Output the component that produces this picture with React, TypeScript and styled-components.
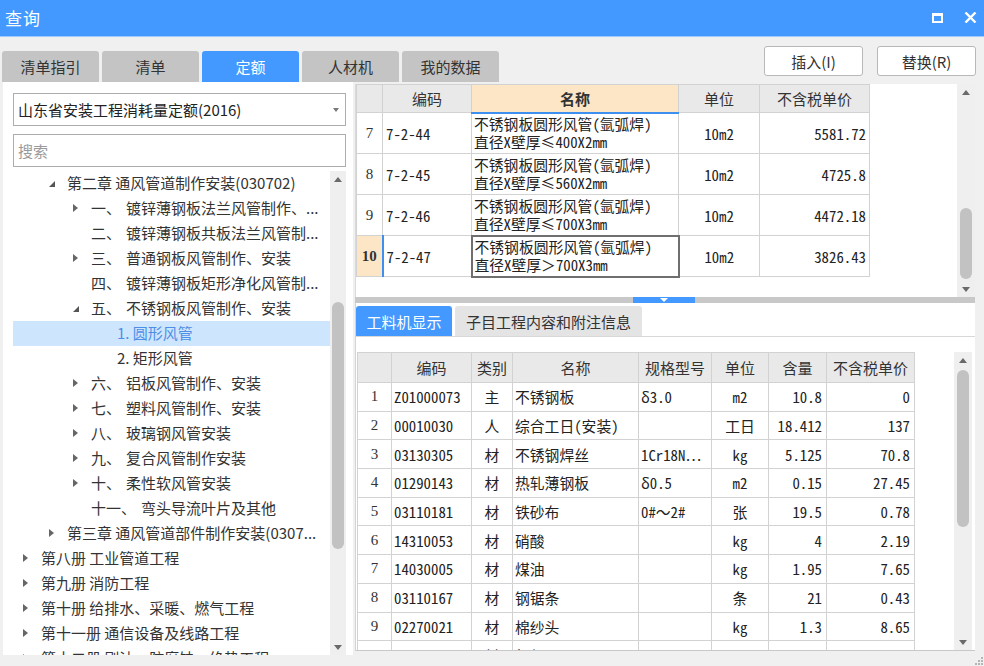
import styled, { createGlobalStyle } from 'styled-components';

const BLUE = '#4399ff';
const GRID = '#d2d2d2';
const PEACH = '#fde6c6';

const GlobalStyle = createGlobalStyle`
  html, body {
    margin: 0;
    padding: 0;
    background: #f0f0f0;
  }
  body {
    font-family: "Noto Sans CJK SC", "Noto Sans", sans-serif;
    color: #333;
    overflow: hidden;
  }
  * {
    box-sizing: border-box;
  }
`;

type TreeItem = {
  level: number;
  caret?: 'open' | 'closed';
  num?: string;
  text: string;
  selected?: boolean;
};

const INDENT = [10, 36, 60, 86];

const treeItems: TreeItem[] = [
  { level: 1, caret: 'open', text: '第二章 通风管道制作安装(030702)' },
  { level: 2, caret: 'closed', num: '一、', text: '镀锌薄钢板法兰风管制作、...' },
  { level: 2, num: '二、', text: '镀锌薄钢板共板法兰风管制...' },
  { level: 2, caret: 'closed', num: '三、', text: '普通钢板风管制作、安装' },
  { level: 2, num: '四、', text: '镀锌薄钢板矩形净化风管制...' },
  { level: 2, caret: 'open', num: '五、', text: '不锈钢板风管制作、安装' },
  { level: 3, text: '1. 圆形风管', selected: true },
  { level: 3, text: '2. 矩形风管' },
  { level: 2, caret: 'closed', num: '六、', text: '铝板风管制作、安装' },
  { level: 2, caret: 'closed', num: '七、', text: '塑料风管制作、安装' },
  { level: 2, caret: 'closed', num: '八、', text: '玻璃钢风管安装' },
  { level: 2, caret: 'closed', num: '九、', text: '复合风管制作安装' },
  { level: 2, caret: 'closed', num: '十、', text: '柔性软风管安装' },
  { level: 2, num: '十一、', text: '弯头导流叶片及其他' },
  { level: 1, caret: 'closed', text: '第三章 通风管道部件制作安装(0307...' },
  { level: 0, caret: 'closed', text: '第八册 工业管道工程' },
  { level: 0, caret: 'closed', text: '第九册 消防工程' },
  { level: 0, caret: 'closed', text: '第十册 给排水、采暖、燃气工程' },
  { level: 0, caret: 'closed', text: '第十一册 通信设备及线路工程' },
  { level: 0, caret: 'closed', text: '第十二册 刷油、防腐蚀、绝热工程' },
];

const quotaRows = [
  { no: '7', code: '7-2-44', name: ['不锈钢板圆形风管(氩弧焊)', '直径X壁厚≤400X2mm'], unit: '10m2', price: '5581.72' },
  { no: '8', code: '7-2-45', name: ['不锈钢板圆形风管(氩弧焊)', '直径X壁厚≤560X2mm'], unit: '10m2', price: '4725.8' },
  { no: '9', code: '7-2-46', name: ['不锈钢板圆形风管(氩弧焊)', '直径X壁厚≤700X3mm'], unit: '10m2', price: '4472.18' },
  { no: '10', code: '7-2-47', name: ['不锈钢板圆形风管(氩弧焊)', '直径X壁厚＞700X3mm'], unit: '10m2', price: '3826.43', active: true },
];

const materialRows = [
  ['1', 'Z01000073', '主', '不锈钢板', 'δ3.0', 'm2', '10.8', '0'],
  ['2', '00010030', '人', '综合工日(安装)', '', '工日', '18.412', '137'],
  ['3', '03130305', '材', '不锈钢焊丝', '1Cr18N…', 'kg', '5.125', '70.8'],
  ['4', '01290143', '材', '热轧薄钢板', 'δ0.5', 'm2', '0.15', '27.45'],
  ['5', '03110181', '材', '铁砂布', '0#～2#', '张', '19.5', '0.78'],
  ['6', '14310053', '材', '硝酸', '', 'kg', '4', '2.19'],
  ['7', '14030005', '材', '煤油', '', 'kg', '1.95', '7.65'],
  ['8', '03110167', '材', '钢锯条', '', '条', '21', '0.43'],
  ['9', '02270021', '材', '棉纱头', '', 'kg', '1.3', '8.65'],
  ['10', '14030037', '材', '氧气', '', 'm3', '4.841', '14.55'],
];

function ScrollBar({ top, size, width = 17 }: { top: number; size: number; width?: number }) {
  return (
    <Track $width={width}>
      <ArrowBox>
        <Arrow $up />
      </ArrowBox>
      <ThumbArea>
        <Thumb $top={top} $size={size} />
      </ThumbArea>
      <ArrowBox>
        <Arrow />
      </ArrowBox>
    </Track>
  );
}

function App() {
  return (
    <Window>
      <GlobalStyle />
      <TitleBar>
        <Title>查询</Title>
        <WinButtons>
          <svg width="11" height="10" viewBox="0 0 11 10">
            <rect x="1" y="1.5" width="9" height="7.5" fill="none" stroke="#fff" strokeWidth="2" />
            <line x1="0" y1="1.5" x2="11" y2="1.5" stroke="#fff" strokeWidth="3" />
          </svg>
          <svg width="13" height="11" viewBox="0 0 13 11">
            <path d="M1.5 0.5 L11.5 10.5 M11.5 0.5 L1.5 10.5" stroke="#fff" strokeWidth="2.4" />
          </svg>
        </WinButtons>
      </TitleBar>

      <Toolbar>
        <TabList>
          <MainTab>清单指引</MainTab>
          <MainTab>清单</MainTab>
          <MainTab $active>定额</MainTab>
          <MainTab>人材机</MainTab>
          <MainTab>我的数据</MainTab>
        </TabList>
        <Actions>
          <ActionButton>插入(I)</ActionButton>
          <ActionButton>替换(R)</ActionButton>
        </Actions>
      </Toolbar>

      <Body>
        <LeftPanel>
          <Select>
            <span>山东省安装工程消耗量定额(2016)</span>
            <SelectArrow />
          </Select>
          <SearchBox placeholder="搜索" readOnly />
          <Tree>
            <TreeList>
              {treeItems.map((item) => (
                <TreeRow key={item.text} $indent={INDENT[item.level]} $selected={item.selected}>
                  <CaretSlot>{item.caret && <Caret $open={item.caret === 'open'} />}</CaretSlot>
                  {item.num && <Num>{item.num}</Num>}
                  <span>{item.text}</span>
                </TreeRow>
              ))}
            </TreeList>
            <ScrollBar top={115} size={247} width={16} />
          </Tree>
        </LeftPanel>

        <RightPanel>
          <TopPane>
            <GridWrap>
              <Grid $width={513}>
                <colgroup>
                  <col style={{ width: 26 }} />
                  <col style={{ width: 89 }} />
                  <col style={{ width: 207 }} />
                  <col style={{ width: 81 }} />
                  <col style={{ width: 110 }} />
                </colgroup>
                <thead>
                  <HeadRow $height={28}>
                    <HeadCell />
                    <HeadCell>编码</HeadCell>
                    <HeadCell $focus>名称</HeadCell>
                    <HeadCell>单位</HeadCell>
                    <HeadCell>不含税单价</HeadCell>
                  </HeadRow>
                </thead>
                <tbody>
                  {quotaRows.map((row) => (
                    <BodyRow key={row.no} $height={41}>
                      <NoCell $active={row.active}>{row.no}</NoCell>
                      <Cell $mark={row.active}>{row.code}</Cell>
                      <NameCell $selected={row.active}>
                        <NameLine>{row.name[0]}</NameLine>
                        <NameLine>{row.name[1]}</NameLine>
                      </NameCell>
                      <Cell $align="center">{row.unit}</Cell>
                      <Cell $align="right">{row.price}</Cell>
                    </BodyRow>
                  ))}
                </tbody>
              </Grid>
            </GridWrap>
            <ScrollBar top={108} size={71} width={18} />
          </TopPane>

          <Splitter>
            <SplitHandle>
              <svg width="8" height="4" viewBox="0 0 8 4">
                <path d="M0 0 H8 L4 4 Z" fill="#fff" />
              </svg>
            </SplitHandle>
          </Splitter>

          <BottomPane>
            <PaneTabs>
              <PaneTab $active $width={96}>工料机显示</PaneTab>
              <PaneTab $width={187}>子目工程内容和附注信息</PaneTab>
            </PaneTabs>
            <PaneBody>
              <GridWrap>
                <Grid $width={557}>
                  <colgroup>
                    <col style={{ width: 34 }} />
                    <col style={{ width: 80 }} />
                    <col style={{ width: 41 }} />
                    <col style={{ width: 126 }} />
                    <col style={{ width: 73 }} />
                    <col style={{ width: 57 }} />
                    <col style={{ width: 58 }} />
                    <col style={{ width: 88 }} />
                  </colgroup>
                  <thead>
                    <HeadRow $height={30}>
                      <HeadCell />
                      <HeadCell>编码</HeadCell>
                      <HeadCell>类别</HeadCell>
                      <HeadCell>名称</HeadCell>
                      <HeadCell>规格型号</HeadCell>
                      <HeadCell>单位</HeadCell>
                      <HeadCell>含量</HeadCell>
                      <HeadCell>不含税单价</HeadCell>
                    </HeadRow>
                  </thead>
                  <tbody>
                    {materialRows.map(([no, code, kind, name, spec, unit, qty, price]) => (
                      <BodyRow key={no} $height={28.7}>
                        <NoCell>{no}</NoCell>
                        <Cell $pad={2}>{code}</Cell>
                        <Cell $align="center">{kind}</Cell>
                        <Cell $pad={2}>{name}</Cell>
                        <Cell $pad={2}>{spec}</Cell>
                        <Cell $align="center">{unit}</Cell>
                        <Cell $align="right" $pad={4}>{qty}</Cell>
                        <Cell $align="right" $pad={4}>{price}</Cell>
                      </BodyRow>
                    ))}
                  </tbody>
                </Grid>
              </GridWrap>
              <ScrollBar top={2} size={157} width={18} />
            </PaneBody>
          </BottomPane>
        </RightPanel>
      </Body>

      <Grip width="10" height="10" viewBox="0 0 10 10">
        {[
          [8, 2],
          [8, 5],
          [5, 5],
          [8, 8],
          [5, 8],
          [2, 8],
        ].map(([x, y]) => (
          <rect key={`${x}-${y}`} x={x - 1} y={y - 1} width="2" height="2" fill="#b5b5b5" />
        ))}
      </Grip>
    </Window>
  );
}

const Window = styled.div`
  position: relative;
  display: flex;
  flex-direction: column;
  width: 984px;
  height: 666px;
  background: #f0f0f0;
  overflow: hidden;
`;

const TitleBar = styled.div`
  display: flex;
  align-items: center;
  justify-content: space-between;
  height: 37px;
  padding: 0 7px 1px 5px;
  background: ${BLUE};
  border-bottom: 1px solid #9ccbff;
`;

const Title = styled.span`
  font-size: 17px;
  color: #fff;
  letter-spacing: 1px;
`;

const WinButtons = styled.div`
  display: flex;
  align-items: center;
  gap: 21px;
`;

const Toolbar = styled.div`
  display: flex;
  justify-content: space-between;
  height: 45px;
  padding: 0 8px 0 2px;
`;

const TabList = styled.div`
  display: flex;
  align-items: flex-end;
  gap: 3px;
`;

const MainTab = styled.div<{ $active?: boolean }>`
  display: flex;
  align-items: center;
  justify-content: center;
  width: 97px;
  height: 31px;
  border-radius: 3px 3px 0 0;
  font-size: 15px;
  color: ${({ $active }) => ($active ? '#fff' : '#333')};
  background: ${({ $active }) => ($active ? BLUE : '#c4c4c4')};
`;

const Actions = styled.div`
  display: flex;
  gap: 14px;
  padding-top: 9px;
`;

const ActionButton = styled.button`
  width: 99px;
  height: 30px;
  padding: 0;
  border: 1px solid #b8b8b8;
  border-radius: 3px;
  background: #fff;
  font-family: inherit;
  font-size: 15px;
  color: #333;
`;

const Body = styled.div`
  display: flex;
  flex: 1;
  padding-left: 3px;
`;

const LeftPanel = styled.div`
  display: flex;
  flex-direction: column;
  width: 350px;
  height: 573px;
  padding: 11px 7px 0 10px;
  background: #fff;
`;

const Select = styled.div`
  display: flex;
  align-items: center;
  justify-content: space-between;
  height: 33px;
  padding: 0 6px 0 4px;
  border: 1px solid #adadad;
  font-size: 15px;
  color: #222;
`;

const SelectArrow = styled.span`
  width: 0;
  height: 0;
  border-left: 3.5px solid transparent;
  border-right: 3.5px solid transparent;
  border-top: 4px solid #777;
`;

const SearchBox = styled.input`
  height: 33px;
  margin-top: 8px;
  padding: 0 4px;
  border: 1px solid #adadad;
  outline: none;
  font-family: inherit;
  font-size: 15px;

  &::placeholder {
    color: #9a9a9a;
  }
`;

const Tree = styled.div`
  display: flex;
  flex: 1;
  min-height: 0;
  margin-top: 4px;
`;

const TreeList = styled.div`
  flex: 1;
  overflow: hidden;
`;

const TreeRow = styled.div<{ $indent: number; $selected?: boolean }>`
  display: flex;
  align-items: center;
  height: 25px;
  padding-left: ${({ $indent }) => $indent}px;
  padding-bottom: 2px;
  font-size: 15px;
  white-space: pre;
  overflow: hidden;
  color: ${({ $selected }) => ($selected ? '#4d8fe6' : '#333')};
  background: ${({ $selected }) => ($selected ? '#cde6fd' : 'transparent')};
`;

const CaretSlot = styled.span`
  display: flex;
  align-items: center;
  flex: none;
  width: 18px;
`;

const Caret = styled.span<{ $open?: boolean }>`
  width: 0;
  height: 0;
  ${({ $open }) =>
    $open
      ? `
    border-left: 6px solid transparent;
    border-bottom: 6px solid #555;
    margin-top: 2px;
  `
      : `
    border-top: 4px solid transparent;
    border-bottom: 4px solid transparent;
    border-left: 5px solid #666;
  `}
`;

const Num = styled.span`
  margin-right: 5px;
`;

const Track = styled.div<{ $width: number }>`
  display: flex;
  flex-direction: column;
  flex: none;
  width: ${({ $width }) => $width}px;
  background: #efefef;
`;

const ArrowBox = styled.div`
  display: flex;
  align-items: center;
  justify-content: center;
  height: 16px;
`;

const Arrow = styled.span<{ $up?: boolean }>`
  width: 0;
  height: 0;
  border-left: 4.5px solid transparent;
  border-right: 4.5px solid transparent;
  ${({ $up }) => ($up ? 'border-bottom: 5px solid #6a6a6a;' : 'border-top: 5px solid #6a6a6a;')}
`;

const ThumbArea = styled.div`
  flex: 1;
  display: flex;
  flex-direction: column;
  align-items: center;
`;

const Thumb = styled.div<{ $top: number; $size: number }>`
  width: 12px;
  height: ${({ $size }) => $size}px;
  margin-top: ${({ $top }) => $top}px;
  border-radius: 6px;
  background: #c2c2c2;
`;

const RightPanel = styled.div`
  display: flex;
  flex-direction: column;
  width: 620px;
  margin-left: 2px;
`;

const TopPane = styled.div`
  display: flex;
  height: 213px;
  margin-top: 2px;
  border-left: 1px solid #dadada;
  background: #fff;
`;

const GridWrap = styled.div`
  flex: 1;
  overflow: hidden;
`;

const Grid = styled.table<{ $width: number }>`
  width: ${({ $width }) => $width}px;
  table-layout: fixed;
  border-collapse: collapse;
`;

const HeadRow = styled.tr<{ $height: number }>`
  height: ${({ $height }) => $height}px;
`;

const BodyRow = styled.tr<{ $height: number }>`
  height: ${({ $height }) => $height}px;
`;

const HeadCell = styled.th<{ $focus?: boolean }>`
  padding: 0;
  border: 1px solid ${GRID};
  border-bottom: ${({ $focus }) => ($focus ? `2px solid #3d8ff0` : `1px solid ${GRID}`)};
  background: ${({ $focus }) => ($focus ? PEACH : '#e9e9e9')};
  font-size: 15px;
  font-weight: ${({ $focus }) => ($focus ? 700 : 400)};
  color: #333;
  text-align: center;
`;

const Cell = styled.td<{ $align?: 'left' | 'center' | 'right'; $pad?: number; $mark?: boolean }>`
  padding: 0 ${({ $pad = 3 }) => $pad}px;
  border: 1px solid ${GRID};
  border-left: ${({ $mark }) => ($mark ? '2px solid #3d8ff0' : `1px solid ${GRID}`)};
  font-family: "Noto Sans Mono CJK SC", "Noto Sans CJK SC", monospace;
  font-size: 14.8px;
  color: #222;
  text-align: ${({ $align = 'left' }) => $align};
  white-space: nowrap;
  overflow: hidden;
`;

const NameCell = styled.td<{ $selected?: boolean }>`
  padding: 0 2px;
  border: ${({ $selected }) => ($selected ? '2px solid #6f6f6f' : `1px solid ${GRID}`)};
  font-family: "Noto Sans Mono CJK SC", "Noto Sans CJK SC", monospace;
  font-size: 14.8px;
  color: #222;
  white-space: nowrap;
  overflow: hidden;
`;

const NameLine = styled.div`
  height: 18px;
  line-height: 18px;
`;

const NoCell = styled.td<{ $active?: boolean }>`
  padding: 0;
  border: 1px solid ${GRID};
  background: ${({ $active }) => ($active ? PEACH : '#fff')};
  font-family: "Liberation Serif", serif;
  font-size: 15px;
  font-weight: ${({ $active }) => ($active ? 700 : 400)};
  color: #333;
  text-align: center;
`;

const Splitter = styled.div`
  display: flex;
  height: 6px;
  background: #c8c8c8;
`;

const SplitHandle = styled.div`
  display: flex;
  justify-content: center;
  width: 62px;
  height: 6px;
  margin-left: 278px;
  padding-top: 1px;
  background: ${BLUE};
`;

const BottomPane = styled.div`
  display: flex;
  flex-direction: column;
  height: 348px;
  padding-top: 3px;
  border-left: 1px solid #d4d4d4;
  border-bottom: 1px solid #c8c8c8;
  background: #fff;
`;

const PaneTabs = styled.div`
  display: flex;
  gap: 3px;
  height: 30px;
`;

const PaneTab = styled.div<{ $active?: boolean; $width: number }>`
  display: flex;
  align-items: center;
  justify-content: center;
  width: ${({ $width }) => $width}px;
  border-radius: 3px 3px 0 0;
  font-size: 15px;
  color: ${({ $active }) => ($active ? '#fff' : '#333')};
  background: ${({ $active }) => ($active ? BLUE : '#e4e4e4')};
`;

const PaneBody = styled.div`
  display: flex;
  flex: 1;
  min-height: 0;
  padding: 15px 3px 0 1px;
  border-top: 1px solid #d8d8d8;
`;

const Grip = styled.svg`
  position: absolute;
  right: 0;
  bottom: 0;
`;

export default App;
